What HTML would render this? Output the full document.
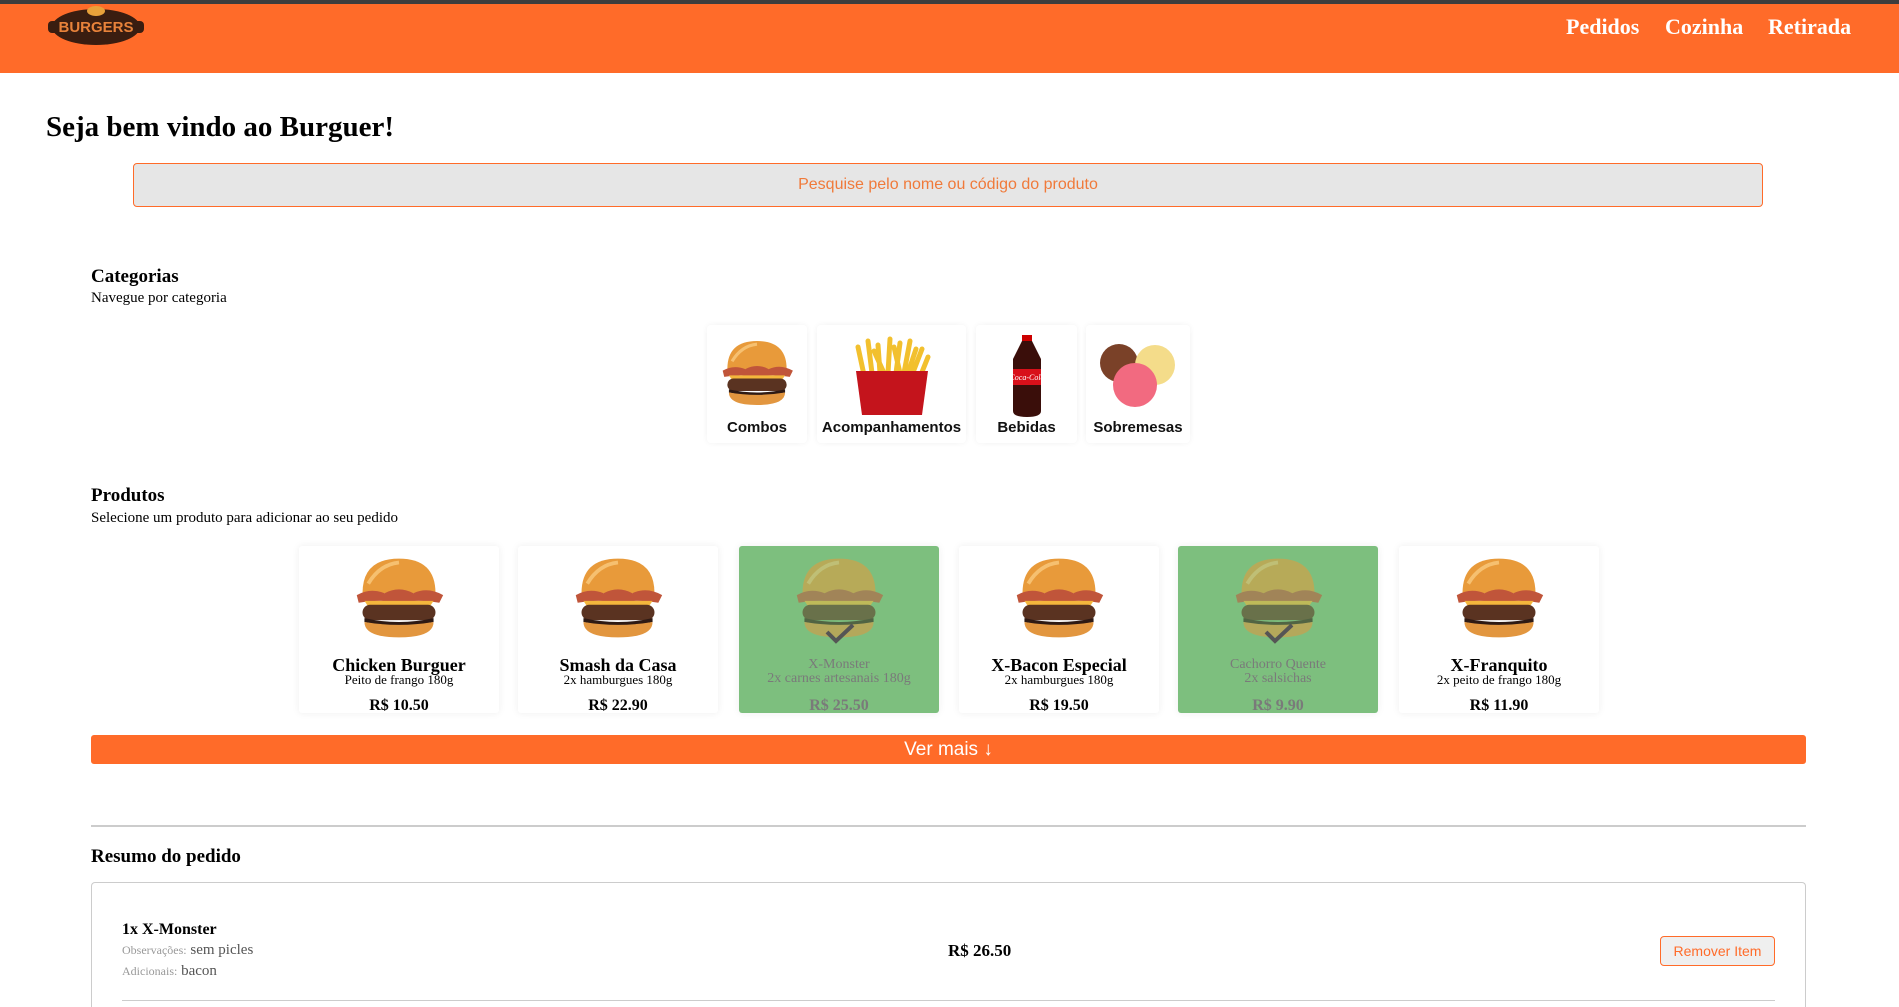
<!DOCTYPE html>
<html style="overflow:hidden;height:1007px"><head><meta charset="utf-8"><style>
*{margin:0;padding:0;box-sizing:border-box}
body{width:1899px;height:1007px;overflow:hidden;background:#fff;font-family:"Liberation Serif",serif;position:relative}
.abs{position:absolute}
.top{left:0;top:0;width:1899px;height:4px;background:#3d3d3d}
.hdr{left:0;top:4px;width:1899px;height:69px;background:#ff6b29}
.nav{top:14px;color:#fff;font-weight:bold;font-size:22px}
.sans{font-family:"Liberation Sans",sans-serif}
.cat{top:325px;height:118px;background:#fff;box-shadow:0 0 6px rgba(0,0,0,.06);border-radius:4px;text-align:center}
.cat span{position:absolute;left:0;right:0;top:94px;font:bold 15px "Liberation Sans",sans-serif;color:#111}
.cat svg{position:absolute;top:10px;left:50%;transform:translateX(-50%)}
.card{top:546px;width:200px;height:167px;background:#fff;box-shadow:0 0 8px rgba(0,0,0,.07);border-radius:3px;text-align:center}
.card.g{background:#7dbf7e}
.card svg.b{position:absolute;left:52px;top:8px}
.card .n{position:absolute;left:0;right:0;top:109px;font-weight:bold;font-size:18px;line-height:20px}
.card .d{position:absolute;left:0;right:0;top:127px;font-size:13px;line-height:14px}
.card .p{position:absolute;left:0;right:0;top:151px;font-weight:bold;font-size:16px}
.card.g .n,.card.g .d,.card.g .p{color:#7a7a7a;font-weight:normal;font-size:13px}
.card.g .n{top:111px;font-size:14px;line-height:15px}
.card.g .d{top:126px;font-size:14px}
.card.g .p{font-weight:bold;font-size:16px}
.card.g svg.b{opacity:.55}
</style></head><body>
<svg width="0" height="0" style="position:absolute">
<defs>
<symbol id="bg" viewBox="0 0 100 90">
<path d="M12 40 Q12 4 50 4 Q88 4 88 40 Z" fill="#e89a3a"/>
<path d="M18 30 Q30 10 50 8" stroke="#f6c070" stroke-width="4" fill="none"/>
<path d="M6 42 Q20 34 35 40 Q50 32 65 40 Q80 33 96 42 L92 50 Q70 46 50 50 Q30 46 8 50Z" fill="#c0553a"/>
<path d="M14 48 L86 48 L82 54 L18 54Z" fill="#f4b63c"/>
<rect x="12" y="52" width="76" height="16" rx="8" fill="#5a3321"/>
<path d="M14 66 Q50 74 86 66 L86 70 Q50 78 14 70Z" fill="#2e1a14"/>
<path d="M14 70 Q14 86 50 86 Q86 86 86 70 Q50 76 14 70Z" fill="#e2963f"/>
</symbol>
</defs></svg>
<div class="abs top"></div>
<div class="abs hdr"></div>
<svg class="abs" style="left:46px;top:5px" width="100" height="43" viewBox="0 0 100 43">
<ellipse cx="50" cy="22" rx="44" ry="18" fill="#3a1d10"/>
<rect x="2" y="16" width="96" height="12" rx="4" fill="#3a1d10"/>
<ellipse cx="50" cy="6" rx="9" ry="5" fill="#e8a13a"/>
<text x="50" y="27" text-anchor="middle" font-family="Liberation Sans" font-weight="bold" font-size="15" fill="#e8823a">BURGERS</text>
</svg>
<div class="abs nav" style="left:1566px">Pedidos</div>
<div class="abs nav" style="left:1665px">Cozinha</div>
<div class="abs nav" style="left:1768px">Retirada</div>

<div class="abs" style="left:46px;top:111px;font-size:29px;font-weight:bold">Seja bem vindo ao Burguer!</div>
<div class="abs sans" style="left:133px;top:163px;width:1630px;height:44px;background:#e6e6e6;border:1px solid #ff6b29;border-radius:4px;color:#f07a3a;font-size:16px;text-align:center;line-height:42px">Pesquise pelo nome ou código do produto</div>

<div class="abs" style="left:91px;top:266px;font-size:19px;font-weight:bold">Categorias</div>
<div class="abs" style="left:91px;top:290px;font-size:15px">Navegue por categoria</div>

<div class="abs cat" style="left:707px;width:100px"><svg width="78" height="76" viewBox="0 0 100 90"><use href="#bg"/></svg><span>Combos</span></div>
<div class="abs cat" style="left:817px;width:149px"><svg width="84" height="82" viewBox="0 0 84 82">
<g stroke="#f2c02e" stroke-width="5" stroke-linecap="round"><path d="M14 40 L8 12M22 38 L18 6M30 38 L28 10M38 38 L40 4M46 38 L50 8M54 38 L60 6M62 40 L72 14M70 42 L78 22M34 38 L24 16M50 38 L44 12M58 38 L66 14"/></g>
<path d="M6 36 L78 36 L72 80 L12 80Z" fill="#c4141c"/></svg><span>Acompanhamentos</span></div>
<div class="abs cat" style="left:976px;width:101px"><svg width="40" height="82" viewBox="0 0 40 82">
<rect x="15" y="0" width="10" height="6" fill="#c00"/>
<path d="M15 6 L25 6 L34 24 L34 76 Q34 82 20 82 Q6 82 6 76 L6 24Z" fill="#3a0e0a"/>
<rect x="6" y="34" width="28" height="16" fill="#d8101a"/>
<text x="20" y="45" text-anchor="middle" font-family="Liberation Serif" font-style="italic" font-size="8" fill="#fff">Coca-Cola</text></svg><span>Bebidas</span></div>
<div class="abs cat" style="left:1086px;width:104px"><svg width="82" height="76" viewBox="0 0 82 76">
<circle cx="22" cy="28" r="19" fill="#7a4128"/>
<circle cx="58" cy="30" r="20" fill="#f4dc8a"/>
<circle cx="38" cy="50" r="22" fill="#f26a80"/></svg><span>Sobremesas</span></div>

<div class="abs" style="left:91px;top:485px;font-size:19px;font-weight:bold">Produtos</div>
<div class="abs" style="left:91px;top:510px;font-size:15px">Selecione um produto para adicionar ao seu pedido</div>

<div class="abs card" style="left:299px"><svg class="b" width="96" height="88"><use href="#bg"/></svg><div class="n">Chicken Burguer</div><div class="d">Peito de frango 180g</div><div class="p">R$ 10.50</div></div>
<div class="abs card" style="left:518px"><svg class="b" width="96" height="88"><use href="#bg"/></svg><div class="n">Smash da Casa</div><div class="d">2x hamburgues 180g</div><div class="p">R$ 22.90</div></div>
<div class="abs card g" style="left:739px"><svg class="b" width="96" height="88"><use href="#bg"/></svg><svg class="abs" style="left:85px;top:76px" width="32" height="22"><path d="M3 10 L12 19 L29 3" stroke="#555" stroke-width="4" fill="none"/></svg><div class="n">X-Monster</div><div class="d">2x carnes artesanais 180g</div><div class="p">R$ 25.50</div></div>
<div class="abs card" style="left:959px"><svg class="b" width="96" height="88"><use href="#bg"/></svg><div class="n">X-Bacon Especial</div><div class="d">2x hamburgues 180g</div><div class="p">R$ 19.50</div></div>
<div class="abs card g" style="left:1178px"><svg class="b" width="96" height="88"><use href="#bg"/></svg><svg class="abs" style="left:85px;top:76px" width="32" height="22"><path d="M3 10 L12 19 L29 3" stroke="#555" stroke-width="4" fill="none"/></svg><div class="n">Cachorro Quente</div><div class="d">2x salsichas</div><div class="p">R$ 9.90</div></div>
<div class="abs card" style="left:1399px"><svg class="b" width="96" height="88"><use href="#bg"/></svg><div class="n">X-Franquito</div><div class="d">2x peito de frango 180g</div><div class="p">R$ 11.90</div></div>

<div class="abs sans" style="left:91px;top:735px;width:1715px;height:29px;background:#ff6b29;border-radius:3px;color:#fff;font-size:19px;text-align:center;line-height:30px">Ver mais ↓</div>
<div class="abs" style="left:91px;top:825px;width:1715px;height:2px;background:#ccc"></div>
<div class="abs" style="left:91px;top:846px;font-size:19px;font-weight:bold">Resumo do pedido</div>
<div class="abs" style="left:91px;top:882px;width:1715px;height:140px;border:1px solid #ccc;border-bottom:none;border-radius:4px 4px 0 0"></div>
<div class="abs" style="left:122px;top:921px;font-size:16px;font-weight:bold">1x X-Monster</div>
<div class="abs" style="left:122px;top:942px;font-size:15px;color:#555"><span style="font-size:12px;color:#999">Observações:</span> sem picles</div>
<div class="abs" style="left:122px;top:963px;font-size:15px;color:#555"><span style="font-size:12px;color:#999">Adicionais:</span> bacon</div>
<div class="abs" style="left:948px;top:941px;font-size:17px;font-weight:bold">R$ 26.50</div>
<div class="abs sans" style="left:1660px;top:936px;width:115px;height:30px;border:1px solid #ff6b29;border-radius:4px;background:#efefef;color:#ff6b29;font-size:14px;text-align:center;line-height:28px">Remover Item</div>
<div class="abs" style="left:122px;top:1000px;width:1653px;height:1px;background:#ccc"></div>
</body></html>
